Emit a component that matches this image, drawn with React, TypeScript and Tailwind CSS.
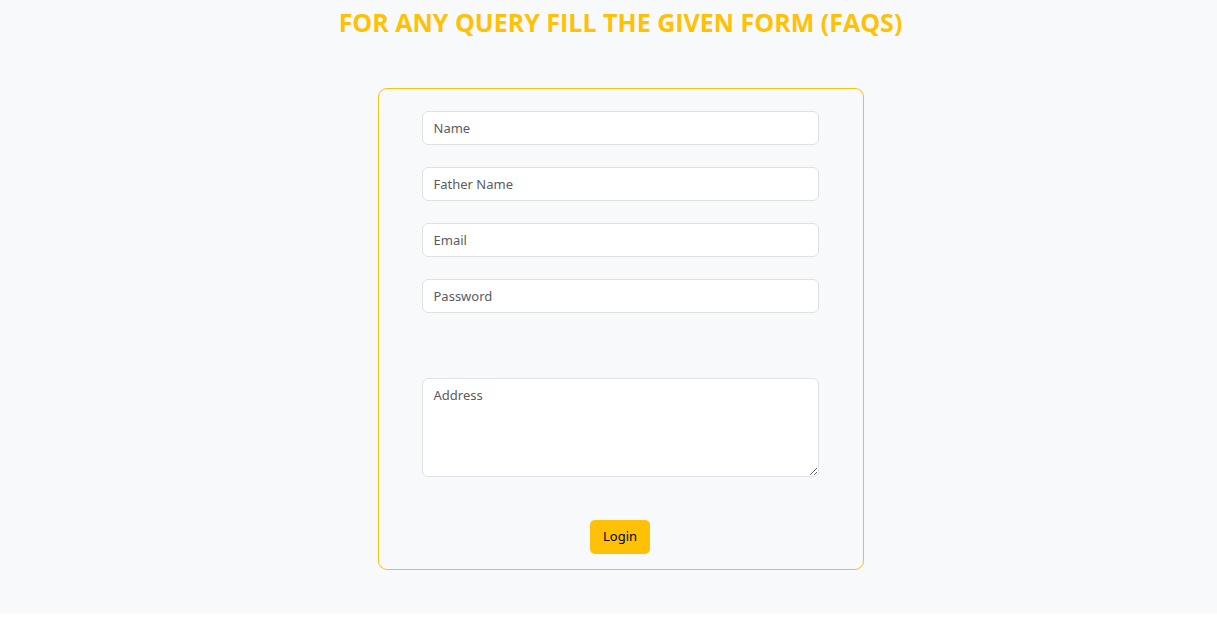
import React from "react";

const fieldClass =
  "block w-full rounded-md border border-[#dee2e6] bg-white px-[11px] text-[13px] text-[#212529] placeholder:text-[#595c5f] placeholder:opacity-100 focus:border-[#ffc107] focus:outline-none";

const fields = [
  { id: "name", label: "Name", type: "text" },
  { id: "father-name", label: "Father Name", type: "text" },
  { id: "email", label: "Email", type: "email" },
  { id: "password", label: "Password", type: "password" },
];

export default function App() {
  return (
    <section className="bg-[#f8f9fa] pb-[43px] pl-6 font-['Noto_Sans','Open_Sans',sans-serif] text-[#212529]">
      <h1 className="pt-1 text-center font-['Open_Sans','Noto_Sans',sans-serif] text-[25px] leading-9 font-bold text-[#ffc107]">
        FOR ANY QUERY FILL THE GIVEN FORM (FAQS)
      </h1>
      <form
        className="mx-auto mt-12 flex w-full max-w-[486px] flex-col rounded-[9px] border border-[#ffc107] pt-[22px] pr-11 pb-[15px] pl-[43px]"
        onSubmit={(event) => event.preventDefault()}
      >
        <div className="flex flex-col gap-[22px]">
          {fields.map((field) => (
            <input
              key={field.id}
              id={field.id}
              type={field.type}
              aria-label={field.label}
              placeholder={field.label}
              className={`${fieldClass} h-[34px]`}
            />
          ))}
        </div>
        <textarea
          id="address"
          aria-label="Address"
          placeholder="Address"
          className={`${fieldClass} mt-[65px] h-[99px] resize-y py-[6px] leading-[21px]`}
        />
        <button
          type="submit"
          className="mt-[43px] h-[34px] cursor-pointer self-center rounded-[5px] bg-[#ffc107] px-[13px] text-[13px] text-black hover:bg-[#ffca2c]"
        >
          Login
        </button>
      </form>
    </section>
  );
}
